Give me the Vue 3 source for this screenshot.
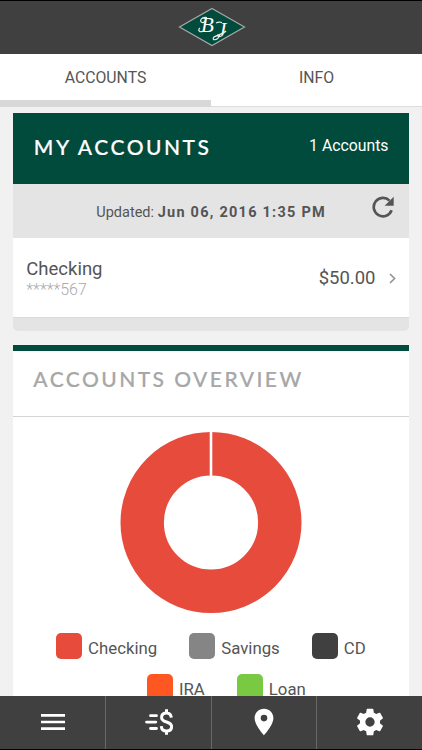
<script setup>
const account = { name: 'Checking', mask: '*****567', balance: '$50.00' }
const legendRows = [
  [
    { label: 'Checking', tone: 'red' },
    { label: 'Savings', tone: 'grey' },
    { label: 'CD', tone: 'dark' },
  ],
  [
    { label: 'IRA', tone: 'orange' },
    { label: 'Loan', tone: 'green' },
  ],
]
</script>

<template>
  <div class="screen">
    <header class="topbar">
      <svg class="logo" width="68" height="40" viewBox="0 0 68 40">
        <path d="M34 1.500 66.500 20 34 38.500 1.500 20Z" fill="#004b3c" stroke="#aaa7a8" stroke-width="1.200" />
        <text x="23" y="24.500" class="monogram">B</text>
        <text x="39" y="29.500" class="monogram">J</text>
        <path d="M29 10.500c-6-1-8 4-5 5 2 .5 3-1 3-2M25 24c-3 2-6-1-3-3M42 28c-3 7-9 5-6 2 3-2 9-3 12-6M38 16c2-1 4-1 6-.500" fill="none" stroke="#e9f0ed" stroke-width="1.200" />
      </svg>
    </header>

    <nav class="tabs">
      <div class="tab active"><span>ACCOUNTS</span></div>
      <div class="tab"><span>INFO</span></div>
    </nav>

    <main class="content">
      <section class="accounts">
        <div class="accounts-head">
          <h2>MY ACCOUNTS</h2>
          <span class="count">1 Accounts</span>
        </div>
        <div class="updated">
          <p>Updated: <b>Jun 06, 2016 1:35 PM</b></p>
          <svg class="refresh" width="22" height="22" viewBox="0 0 22 22">
            <path d="M19.600 14.200A9.200 9.200 0 1 1 17.500 4.600" fill="none" stroke="#555" stroke-width="2.700" />
            <path d="M21.700.700v9.100h-9.100Z" fill="#555" />
          </svg>
        </div>
        <div class="account">
          <div class="who">
            <span class="name">{{ account.name }}</span>
            <span class="mask">{{ account.mask }}</span>
          </div>
          <span class="balance">{{ account.balance }}</span>
          <svg class="chevron" width="7" height="11" viewBox="0 0 7 11">
            <path d="m1 1 4.600 4.500L1 10" fill="none" stroke="#929292" stroke-width="1.600" />
          </svg>
        </div>
        <div class="accounts-foot"></div>
      </section>

      <section class="overview">
        <h2>ACCOUNTS OVERVIEW</h2>
        <svg class="donut" width="182" height="182" viewBox="0 0 182 182">
          <circle cx="91" cy="91.500" r="68.800" fill="none" stroke="#e64b3c" stroke-width="43.400" />
          <path d="M91 0v46" stroke="#fff" stroke-width="2.600" />
        </svg>
        <div v-for="(row, i) in legendRows" :key="i" class="legend">
          <div v-for="item in row" :key="item.label" class="entry">
            <i :class="item.tone"></i><span>{{ item.label }}</span>
          </div>
        </div>
      </section>
    </main>

    <footer class="bottombar">
      <div class="action">
        <svg width="24" height="18" viewBox="0 0 24 18">
          <path d="M0 2.300h24M0 9h24M0 15.600h24" stroke="#fff" stroke-width="2.700" />
        </svg>
      </div>
      <div class="action">
        <svg width="28" height="28" viewBox="0 0 28 28">
          <path d="M5.500 7.700h6M1.500 14.100h9.300M5.500 20.500h6" stroke="#fff" stroke-width="2.800" stroke-linecap="round" />
          <path d="M26.300 9.700C26 6.800 24.300 5 21.600 5c-3 0-5 1.700-5 4.400 0 6 10 3.200 10 9.200 0 2.800-2 4.500-5 4.500-3.200 0-5.200-1.900-5.300-5M21.500 1.300V5M21.500 23v3.700" fill="none" stroke="#fff" stroke-width="3" />
        </svg>
      </div>
      <div class="action">
        <svg width="20" height="28" viewBox="0 0 20 28">
          <path fill="#fff" fill-rule="evenodd" d="M10 .8C4.700.8.6 4.900.6 10.100.6 17.200 10 27.400 10 27.400s9.400-10.200 9.400-17.300C19.400 4.900 15.300.8 10 .8Zm0 6A3.300 3.300 0 1 1 10 13.400 3.300 3.300 0 0 1 10 6.800Z" />
        </svg>
      </div>
      <div class="action">
        <svg width="32" height="32" viewBox="0 0 24 24">
          <path fill="#fff" d="M19.430 12.980c.040-.320.070-.640.070-.980s-.030-.660-.070-.980l2.110-1.650c.190-.150.240-.420.120-.640l-2-3.460c-.120-.220-.390-.300-.610-.220l-2.490 1c-.520-.400-1.080-.730-1.690-.980l-.380-2.650C14.460 2.180 14.250 2 14 2h-4c-.250 0-.460.180-.490.420l-.380 2.650c-.610.250-1.170.590-1.690.980l-2.490-1c-.230-.090-.490 0-.610.220l-2 3.460c-.130.220-.070.490.120.640l2.110 1.650c-.040.320-.070.650-.070.980s.030.660.070.980l-2.110 1.650c-.190.150-.240.420-.120.640l2 3.460c.120.220.390.300.610.220l2.490-1c.520.400 1.080.730 1.690.980l.380 2.650c.030.240.240.420.490.420h4c.250 0 .460-.180.490-.420l.380-2.650c.610-.250 1.170-.590 1.690-.980l2.490 1c.230.090.490 0 .610-.220l2-3.460c.120-.220.070-.490-.120-.640l-2.110-1.650ZM12 15.500a3.500 3.500 0 1 1 0-7 3.500 3.500 0 0 1 0 7Z" />
        </svg>
      </div>
    </footer>
  </div>
</template>

<style>
body { margin: 0; }
</style>

<style scoped>
* { box-sizing: border-box; }
.screen {
  display: flex;
  flex-direction: column;
  width: 422px;
  height: 750px;
  overflow: hidden;
  background: #f1f1f1;
  color: #555;
  font-family: Roboto, "Liberation Sans", sans-serif;
}
.topbar {
  display: flex;
  flex: none;
  justify-content: center;
  height: 54px;
  padding-top: 6px;
  border-top: 1px solid #000;
  background: #404040;
}
.logo { margin-left: 1px; }
.monogram {
  font: italic 21px "Liberation Serif", serif;
  fill: #fff;
}
.tabs { display: flex; flex: none; height: 53px; }
.tab {
  flex: 1;
  padding-top: 14px;
  border-bottom: 1px solid #ddd;
  background: #fff;
  font-size: 15.800px;
  line-height: 19px;
  text-align: center;
}
.tab.active { border-bottom: 7px solid #d8d8d8; }
.content { flex: 1; min-height: 0; overflow: hidden; padding: 6px 13.500px 0 13.300px; }
h2 {
  margin: 0;
  font-family: Lato, sans-serif;
  font-size: 21px;
  font-weight: 500;
  line-height: 26px;
  -webkit-text-stroke: 0.200px currentColor;
}
.accounts-head {
  display: flex;
  align-items: flex-start;
  justify-content: space-between;
  height: 71px;
  padding: 21px 20px 0 20.500px;
  background: #004b3c;
  color: #fff;
}
.accounts-head h2 { letter-spacing: 2.500px; }
.count { padding-top: 1px; font-size: 15.800px; line-height: 22px; }
.updated {
  display: flex;
  justify-content: flex-end;
  height: 54px;
  padding: 12px 15px 0 0;
  background: #e4e4e4;
}
.updated p { margin: 7px 45.500px 0 0; font-size: 14.500px; line-height: 19px; }
.updated b { letter-spacing: 1.250px; }
.account {
  display: flex;
  align-items: center;
  height: 79px;
  padding: 1px 13px 0;
  background: #fff;
}
.who { display: flex; flex: 1; flex-direction: column; padding-top: 2px; }
.name { font-size: 18.500px; line-height: 21px; }
.mask { color: #aaa; font-size: 16px; font-weight: 300; line-height: 20px; }
.balance { margin-right: 13px; font-size: 18.500px; }
.accounts-foot {
  height: 14px;
  border-top: 1px solid #dadada;
  border-radius: 0 0 5px 5px;
  background: #e4e4e4;
}
.overview {
  display: flex;
  flex-direction: column;
  align-items: center;
  height: 400px;
  margin-top: 14px;
  border-top: 6px solid #004b3c;
  background: #fff;
}
.overview h2 {
  flex: none;
  align-self: stretch;
  height: 66px;
  padding: 15px 20px 0;
  border-bottom: 1px solid #d4d4d4;
  color: #a7a7a7;
  letter-spacing: 2.450px;
}
.donut { flex: none; margin-top: 14px; }
.legend { display: flex; justify-content: center; gap: 32px; height: 41px; }
.donut + .legend { margin-top: 20px; }
.legend:last-child { padding-left: 31px; }
.entry { display: flex; align-items: flex-start; gap: 6px; }
.entry span { padding-top: 8px; font-size: 16.800px; line-height: 14px; }
.entry i { width: 26px; height: 26px; border-radius: 5px; }
.red { background: #e64b3c; }
.grey { background: #858585; }
.dark { background: #404040; }
.orange { background: #ff5722; }
.green { background: #7ac943; }
.bottombar {
  display: flex;
  flex: none;
  height: 54px;
  border-bottom: 1px solid #000;
  background: #404040;
}
.action {
  display: flex;
  flex: 1;
  align-items: center;
  justify-content: center;
  padding: 0 0 2px 1px;
  border-right: 1px solid #686868;
}
.action:last-child { border-right: 0; }
</style>
